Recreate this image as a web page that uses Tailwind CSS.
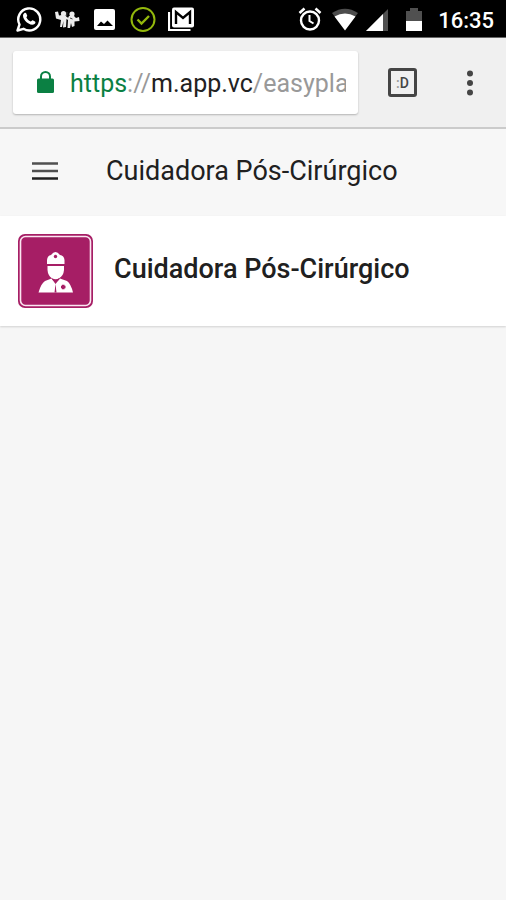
<!DOCTYPE html>
<html lang="pt-BR">
<head>
<meta charset="utf-8">
<meta name="viewport" content="width=device-width, initial-scale=1">
<title>Cuidadora Pós-Cirúrgico</title>
<script src="https://cdn.jsdelivr.net/npm/@tailwindcss/browser@4"></script>
</head>
<body class="flex min-h-screen flex-col bg-[#f6f6f6] font-[Roboto,sans-serif] text-[#202020]">

<!-- System status bar -->
<div class="flex h-[38px] items-center justify-between border-b border-[#666] bg-black pr-3 pl-4 text-white">
  <div class="flex items-center gap-3">
    <svg class="h-[26px] w-[26px]" viewBox="0 0 26 26" aria-label="WhatsApp">
      <path d="M1.500 24.500L3.500 18.500A11 11 0 1 1 7.500 22.800Z" fill="none" stroke="#fff" stroke-width="2.400" stroke-linejoin="round"/>
      <path d="M8.200 7.200C9 6.500 10 6.600 10.300 7.400L11.200 9.500C11.400 10.200 10.200 11.200 10.400 11.600C11.400 13.500 12.800 14.800 14.600 15.500C15.200 15.700 16 14 16.700 14.300L19 15.500C19.800 16 19.400 17.500 18.500 18.100C14 21 5.200 13 7.300 8.300Z" fill="#fff"/>
    </svg>
    <svg class="h-[26px] w-[26px]" viewBox="0 0 26 26" aria-label="Jogo">
      <g fill="#ececec"><circle cx="9.500" cy="7.500" r="2.600"/><circle cx="18" cy="8" r="2.600"/>
      <path d="M1 6L4 5.500L5 9.500L8 9L12 9.500L14 12L15 10L20 10L22 12L25 11L25.500 15L20.500 15.500L20.500 20L18 21L17 17L16 22L13.500 22L14 14L12.500 13L12 21L9 21.500L9.500 15L8 21L6 21L7 14L2 12.500Z"/></g>
      <path d="M13 6L12.500 11M16 12L18.500 13" stroke="#444" stroke-width="1"/>
    </svg>
    <svg class="h-[26px] w-[26px]" viewBox="0 0 26 26" aria-label="Imagem">
      <rect x="2" y="3" width="21" height="21" rx="2" fill="#fff"/>
      <path d="M5 20L9 15.500L12 18L15.500 14.500L21 20Z" fill="#000"/>
    </svg>
    <svg class="h-[26px] w-[26px]" viewBox="0 0 26 26" fill="none" stroke="#93b80c" aria-label="Concluído">
      <circle cx="13" cy="13.500" r="11.500" stroke-width="2"/><path d="M7.500 13.500L11.500 17.500L19 10" stroke-width="2.400"/>
    </svg>
    <svg class="h-[26px] w-[28px]" viewBox="0 0 28 26" aria-label="Gmail">
      <path d="M1 6V24H22.500" fill="none" stroke="#fff" stroke-width="2.200"/>
      <rect x="4" y="1.500" width="22" height="20" rx="2" fill="#fff"/>
      <path d="M8 18V6L15 12L22 6V18" fill="none" stroke="#000" stroke-width="2.400"/>
    </svg>
  </div>
  <div class="flex items-center">
    <svg class="mr-2.5 h-[26px] w-[24px]" viewBox="0 0 24 26" fill="none" stroke="#fff" aria-label="Alarme">
      <circle cx="12" cy="14.500" r="9" stroke-width="2.400"/><path d="M11.500 9V15L15.500 17.500" stroke-width="2"/><path d="M1.500 7L6.500 2.500M22.500 7L17.500 2.500" stroke-width="2.600"/>
    </svg>
    <svg class="mr-2 h-[26px] w-[26px]" viewBox="0 0 26 26" aria-label="Wi-Fi">
      <path d="M0 7Q13 -1.500 26 7L13 23.500Z" fill="#4c4c4c"/><path d="M2.500 10.500Q13 4.500 23.500 10.500L13 24.500Z" fill="#fff"/>
    </svg>
    <svg class="mr-4 h-[26px] w-[24px]" viewBox="0 0 24 26" aria-label="Sinal">
      <path d="M0 25L22 3V25Z" fill="#505050"/><path d="M0 25L17 8V25Z" fill="#fff"/>
    </svg>
    <svg class="mr-4 h-[26px] w-[16px]" viewBox="0 0 16 26" aria-label="Bateria">
      <path d="M0 5H4V2H12V5H16V15H0Z" fill="#505050"/><path d="M0 15H16V25H0Z" fill="#fff"/>
    </svg>
    <time class="pt-1 text-[22px] leading-6 font-medium">16:35</time>
  </div>
</div>

<!-- Browser toolbar -->
<div class="flex h-[91px] items-center border-b-2 border-[#cbcbcb] bg-[#f0f0f0] pr-4 pl-[13px]">
  <button type="button" aria-label="Endereço" class="flex h-[63px] min-w-0 flex-1 items-center rounded-[3px] bg-white pr-3 pl-6 text-left shadow-[0_1px_2px_rgba(0,0,0,0.25)]">
    <svg class="h-[24px] w-[17px] shrink-0" viewBox="0 0 17 24" aria-hidden="true">
      <path d="M4 9V5.500A4.500 4.500 0 0 1 13 5.500V9" fill="none" stroke="#0b8043" stroke-width="2"/><rect y="7.500" width="17" height="14.500" rx="1.500" fill="#0b8043"/>
    </svg>
    <span class="ml-4 min-w-0 flex-1 overflow-hidden pt-0.5 text-[25px] leading-8 whitespace-nowrap text-[#999]"><span class="text-[#0b8043]">https</span>://<span class="text-[#222]">m.app.vc</span>/easypla</span>
  </button>
  <button type="button" aria-label="Abas" class="ml-[30px] flex h-[29px] w-[29px] items-center justify-center rounded-[3px] border-[3px] border-[#454545] text-[14px] leading-4 font-medium text-[#454545]"><span class="text-[#999]">:</span>D</button>
  <button type="button" aria-label="Mais opções" class="ml-[33px] flex h-10 w-10 items-center justify-center">
    <svg class="h-[26px] w-[8px]" viewBox="0 0 8 26" fill="#454545" aria-hidden="true"><circle cx="4" cy="3.500" r="3"/><circle cx="4" cy="13" r="3"/><circle cx="4" cy="22.500" r="3"/></svg>
  </button>
</div>

<!-- App header -->
<header class="flex h-[87px] items-center bg-[#f7f7f7] pb-1 pl-8">
  <button type="button" aria-label="Menu" class="w-[26px]">
    <svg class="h-[20px] w-[26px]" viewBox="0 0 26 20" aria-hidden="true"><path d="M0 2.500H26M0 10H26" stroke="#505050" stroke-width="2.500"/><path d="M0 17.500H26" stroke="#202020" stroke-width="2.500"/></svg>
  </button>
  <h1 class="ml-12 text-[27px] leading-8">Cuidadora Pós-Cirúrgico</h1>
</header>

<main>
  <a href="#" class="flex h-[110px] items-center bg-white pl-[18px] shadow-[0_1px_2px_rgba(0,0,0,0.15)]">
    <svg class="h-[74px] w-[75px]" viewBox="0 0 75 74" aria-hidden="true">
      <rect width="75" height="74" rx="7" fill="#a61e65"/>
      <rect x="2.500" y="2.500" width="70" height="69" rx="5" fill="none" stroke="#fbe6f1" stroke-width="1.600"/>
      <path d="M29 30V26Q29.500 21.500 33 21Q37.500 15 42 21Q46 21.500 46.500 26V30Z" fill="#fff"/>
      <circle cx="37.500" cy="22.500" r="1.700" fill="#a61e65"/>
      <path d="M29.500 32H46V36Q45.500 41.500 41.500 44Q37.500 46.500 33.500 44Q30 41.500 29.500 36Z" fill="#fff"/>
      <path d="M20.500 58.500Q23 49.500 27 47L33.500 44.500L37.500 50L42 44.500L49 47Q53 50 55 58.500Z" fill="#fff"/>
      <path d="M34.500 45L37.500 47.500L41 45" fill="none" stroke="#a61e65" stroke-width="1.200"/>
      <path d="M37.500 50L36.500 58.500H38.500Z" fill="#a61e65"/><path d="M43 53H47.500M45.200 50.800V55.200" stroke="#a61e65" stroke-width="2.600"/>
    </svg>
    <h2 class="ml-[21px] pb-1 text-[27px] leading-8 font-medium">Cuidadora Pós-Cirúrgico</h2>
  </a>
</main>
</body>
</html>
